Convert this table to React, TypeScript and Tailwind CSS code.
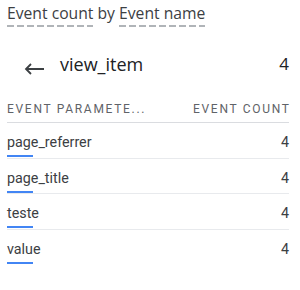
const rows = [
  { name: "page_referrer", count: 4 },
  { name: "page_title", count: 4 },
  { name: "teste", count: 4 },
  { name: "value", count: 4 },
];

function BackArrow() {
  return (
    <svg width="20" height="12" viewBox="0 0 20 12" fill="none">
      <path d="M20 6H2M7 1L2 6l5 5" stroke="#3c4043" strokeWidth="1.8" />
    </svg>
  );
}

const dashed =
  "pb-[3px] bg-[repeating-linear-gradient(to_right,#b0b4b8_0_7px,transparent_7px_10px)] bg-no-repeat bg-bottom bg-[length:100%_2px]";

export default function App() {
  return (
    <div className="w-[300px] h-[290px] bg-white pl-[7px] pr-[11px] pt-[3px]" style={{ fontFamily: "Roboto, sans-serif" }}>
      <div className="text-[15.7px] leading-[21px] text-[#3c4043]" style={{ fontFamily: "'Open Sans', sans-serif" }}>
        <span className={dashed}>Event count</span>{" "}
        by{" "}
        <span className={dashed}>Event name</span>
      </div>

      <div className="flex items-center mt-[26px] h-[28px]">
        <div className="w-[53px] pl-[17px] pt-[10px]">
          <BackArrow />
        </div>
        <div className="flex-1 text-[18px] text-[#202124]" style={{ fontFamily: "'Open Sans', sans-serif" }}>
          view_item
        </div>
        <div className="text-[17px] text-[#202124]" style={{ fontFamily: "'Open Sans', sans-serif" }}>
          4
        </div>
      </div>

      <div className="flex justify-between mt-[14px] h-[31px] items-center pt-[3px] text-[12px] tracking-[1.7px] text-[#5f6368] border-b border-[#dadce0]">
        <span>EVENT PARAMETE...</span>
        <span className="-mr-[1.7px]">EVENT COUNT</span>
      </div>

      {rows.map((r, i) => (
        <div
          key={r.name}
          className={i < rows.length - 1 ? "h-[35.6px] pt-[9px] border-b border-[#e8eaed]" : "h-[35.6px] pt-[9px]"}
        >
          <div className="flex justify-between text-[14.3px] leading-[20px] text-[#3c4043]">
            <span>{r.name}</span>
            <span>{r.count}</span>
          </div>
          <div className="mt-[3px] w-[26px] h-[2px] bg-[#4285f4]" />
        </div>
      ))}
    </div>
  );
}
